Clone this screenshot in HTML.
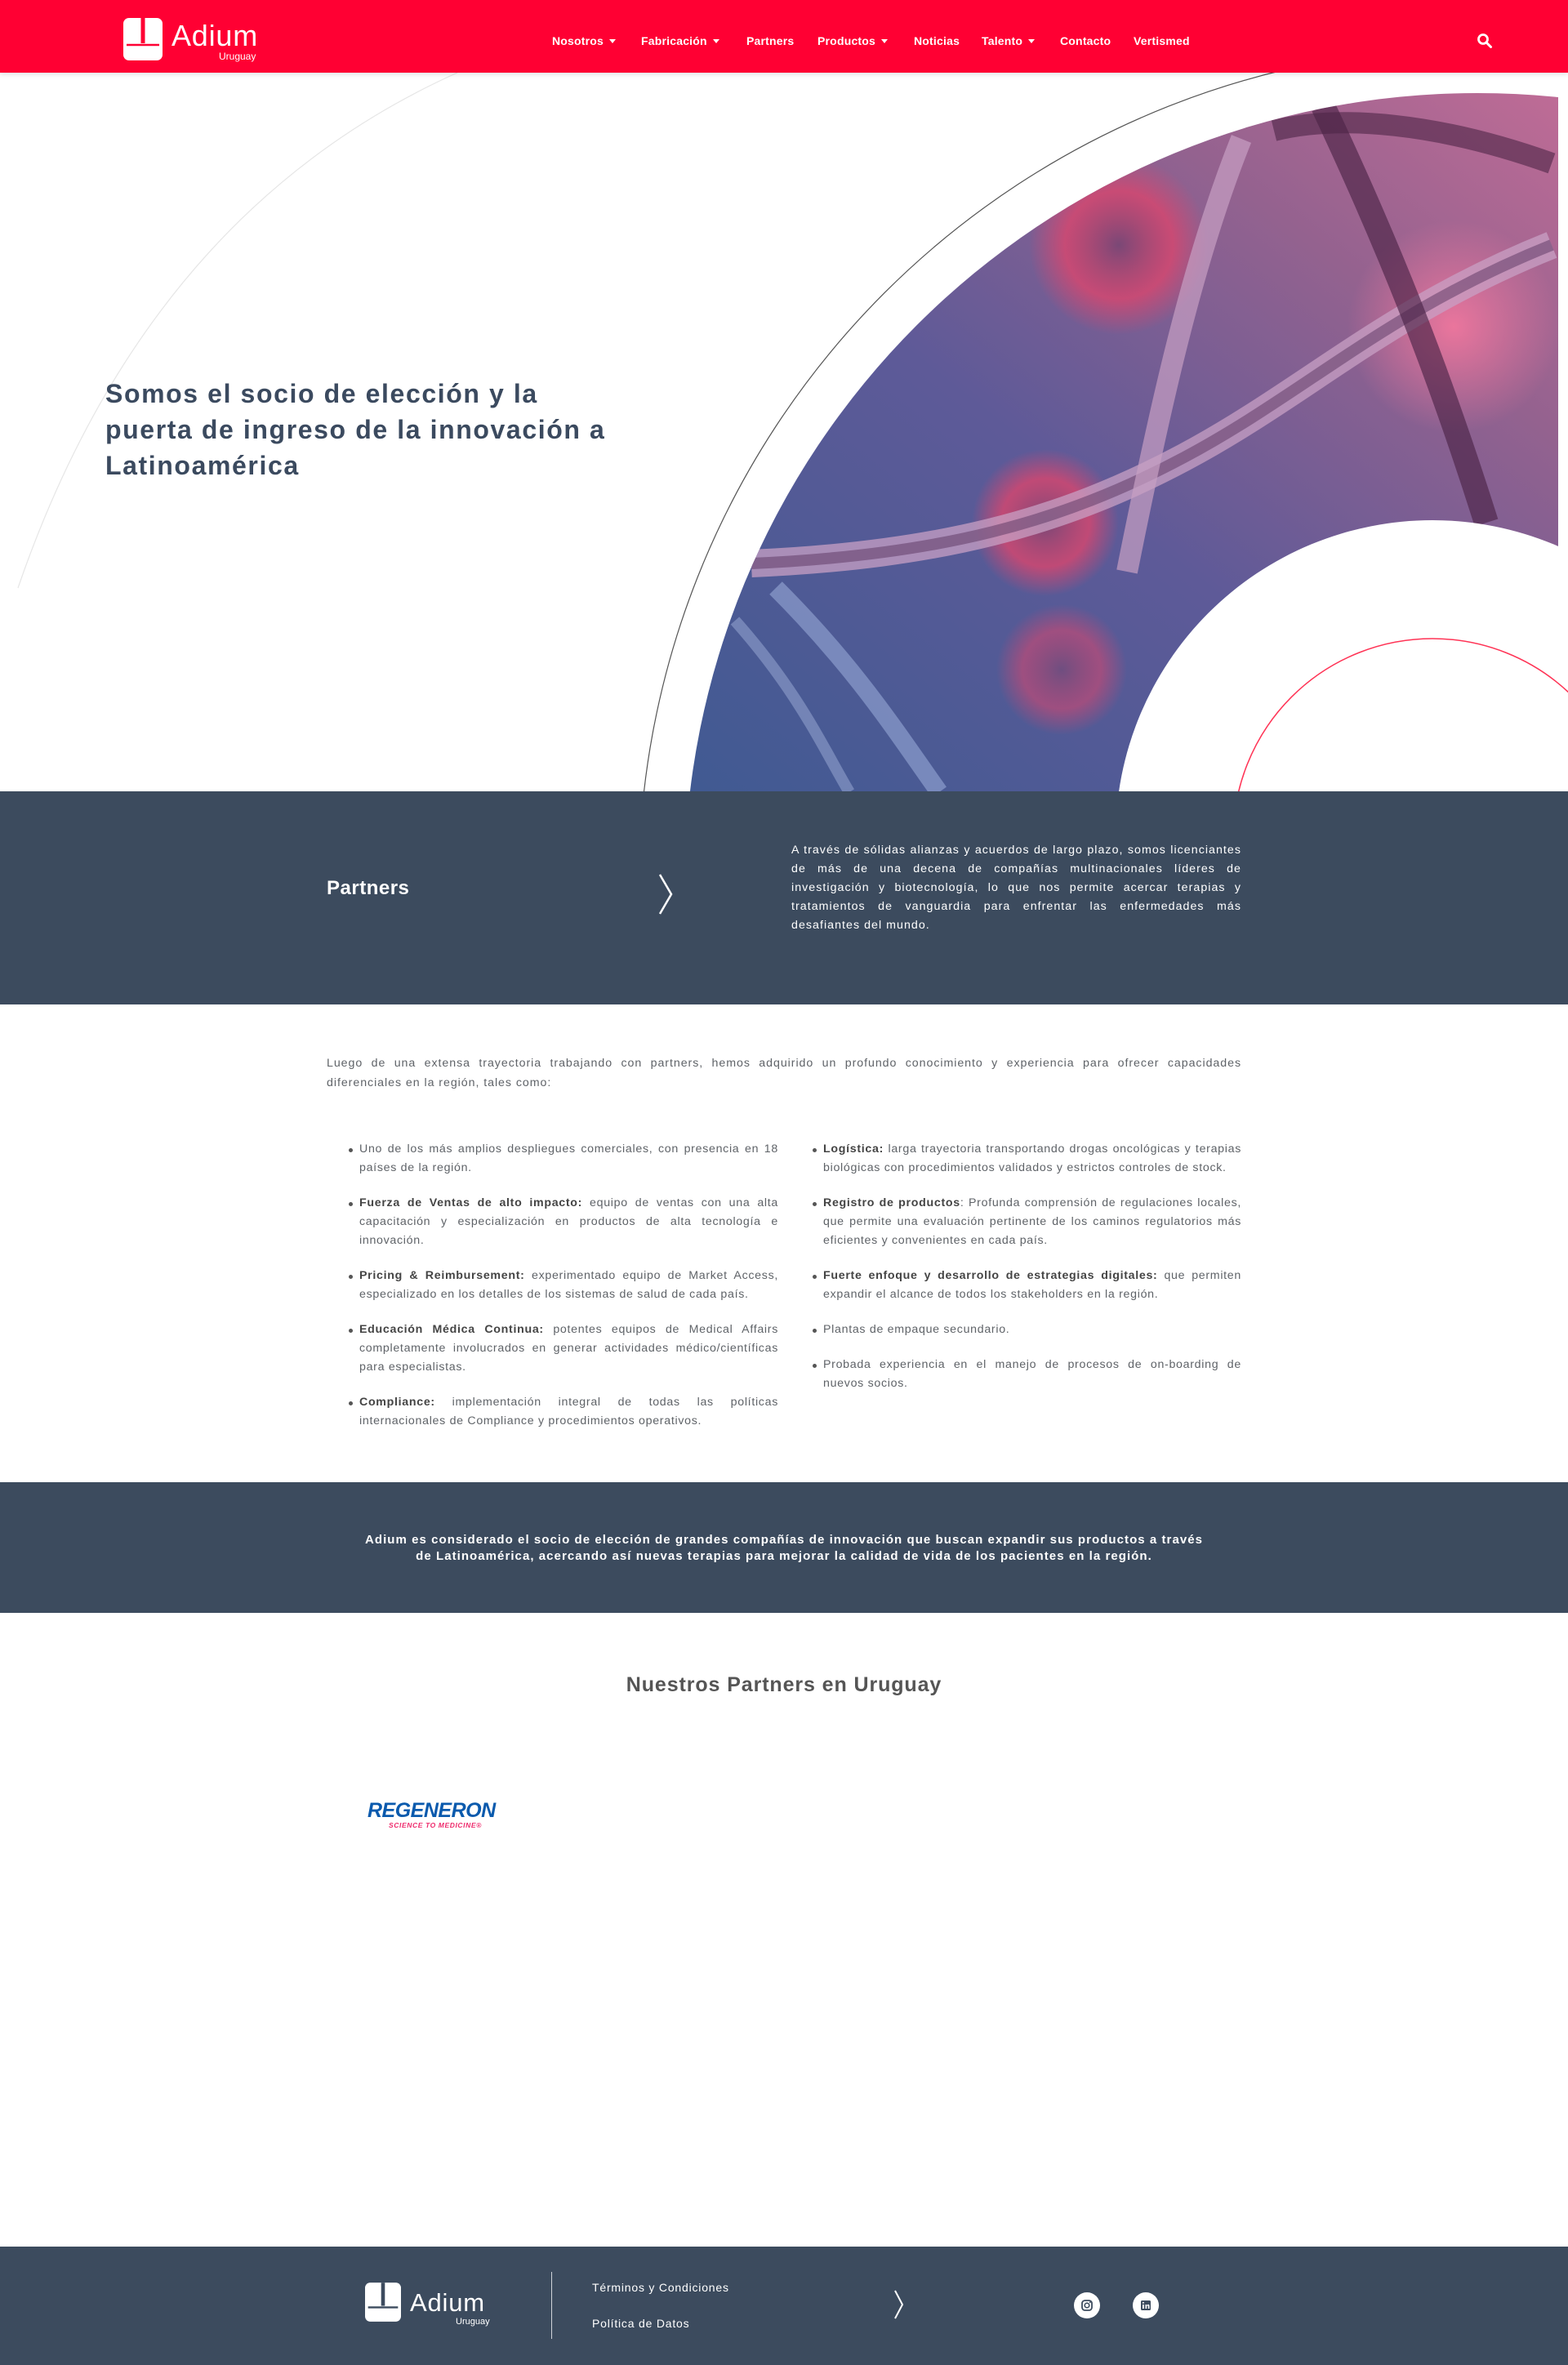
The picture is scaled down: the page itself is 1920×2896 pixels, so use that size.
<!DOCTYPE html>
<html><head><meta charset="utf-8">
<style>
*{margin:0;padding:0;box-sizing:border-box}
body{width:1920px;height:2896px;position:relative;background:#fff;font-family:"Liberation Sans",sans-serif;overflow:hidden}
.abs{position:absolute}
header{position:absolute;left:0;top:0;width:1920px;height:89px;background:#ff0033;box-shadow:0 2px 6px rgba(0,0,0,.12);z-index:5}
.nav{position:absolute;top:42px;color:#fff;font-size:14px;font-weight:bold;white-space:nowrap;letter-spacing:0.2px}
.car{display:inline-block;width:0;height:0;border-left:4px solid transparent;border-right:4px solid transparent;border-top:5px solid #fff;margin-left:7px;vertical-align:2px}
.band{position:absolute;left:0;width:1920px;background:#3c4b5e}
p.j{text-align:justify}
.col{position:absolute;color:#5f6368;font-size:14.2px;line-height:23px;letter-spacing:0.7px}
.col li{list-style:none;position:relative;padding-left:0;margin-bottom:20px;text-align:justify}
.col li:before{content:"";position:absolute;left:-13px;top:10px;width:5px;height:5px;border-radius:50%;background:#555}
.col b{color:#444}
</style></head><body>
<header>
  <svg class="abs" style="left:151px;top:22px" width="48" height="52" viewBox="0 0 48 52">
    <rect x="0" y="0" width="48" height="52" rx="7" fill="#fff"/>
    <rect x="21.5" y="0" width="5" height="31" fill="#ff0033"/>
    <path d="M4 33 H44" stroke="#ff0033" stroke-width="2.5" fill="none"/>
  </svg>
  <div class="abs" style="left:210px;top:23px;color:#fff;font-size:36px;letter-spacing:0.8px">Adium</div>
  <div class="abs" style="left:268px;top:62px;color:#fff;font-size:12px">Uruguay</div>
  <div class="nav" style="left:676px">Nosotros<span class="car"></span></div>
  <div class="nav" style="left:785px">Fabricación<span class="car"></span></div>
  <div class="nav" style="left:914px">Partners</div>
  <div class="nav" style="left:1001px">Productos<span class="car"></span></div>
  <div class="nav" style="left:1119px">Noticias</div>
  <div class="nav" style="left:1202px">Talento<span class="car"></span></div>
  <div class="nav" style="left:1298px">Contacto</div>
  <div class="nav" style="left:1388px">Vertismed</div>
  <svg class="abs" style="left:1808px;top:40px" width="20" height="20" viewBox="0 0 20 20"><circle cx="8" cy="8" r="5.5" stroke="#fff" stroke-width="2.8" fill="none"/><path d="M12 12 L17.5 17.5" stroke="#fff" stroke-width="3" stroke-linecap="round"/></svg>
</header>

<svg class="abs" style="left:0;top:0" width="1920" height="970" viewBox="0 0 1920 970">
  <defs>
    <clipPath id="cc"><circle cx="1809" cy="1085" r="971"/></clipPath>
    <linearGradient id="bg" x1="0" y1="1" x2="1" y2="0">
      <stop offset="0" stop-color="#3f5a92"/>
      <stop offset="0.45" stop-color="#5e5a98"/>
      <stop offset="0.75" stop-color="#94628f"/>
      <stop offset="1" stop-color="#c06c96"/>
    </linearGradient>
    <radialGradient id="v1"><stop offset="0" stop-color="#7a4876"/><stop offset="0.6" stop-color="#d9466e" stop-opacity=".8"/><stop offset="1" stop-color="#d9466e" stop-opacity="0"/></radialGradient>
    <radialGradient id="v2"><stop offset="0" stop-color="#ff7aa0" stop-opacity=".8"/><stop offset="1" stop-color="#ff7aa0" stop-opacity="0"/></radialGradient>
  </defs>
  <path d="M22 720 Q180 260 560 89" stroke="#e6e6e6" stroke-width="1.2" fill="none"/>
  <circle cx="1809" cy="1085" r="1027" stroke="#555" stroke-width="1.2" fill="none"/>
  <g clip-path="url(#cc)">
    <rect x="800" y="100" width="1108" height="870" fill="url(#bg)"/>
    <circle cx="1370" cy="300" r="110" fill="url(#v1)"/>
    <circle cx="1780" cy="400" r="130" fill="url(#v2)"/>
    <circle cx="1280" cy="640" r="90" fill="url(#v1)"/>
    <circle cx="1300" cy="820" r="80" fill="url(#v1)" opacity=".7"/>
    <path d="M920 690 C1150 680 1300 640 1450 560 C1600 480 1700 380 1900 300" stroke="#c8a0c4" stroke-width="34" fill="none" opacity=".75"/>
    <path d="M920 690 C1150 680 1300 640 1450 560 C1600 480 1700 380 1900 300" stroke="#5a3460" stroke-width="14" fill="none" opacity=".5"/>
    <path d="M1520 170 C1460 320 1420 500 1380 700" stroke="#c7a0c3" stroke-width="26" fill="none" opacity=".7"/>
    <path d="M1620 130 C1700 300 1760 450 1820 640" stroke="#4c2446" stroke-width="30" fill="none" opacity=".65"/>
    <path d="M1560 160 C1640 140 1760 150 1900 200" stroke="#4c2446" stroke-width="26" fill="none" opacity=".6"/>
    <path d="M950 720 C1050 820 1100 900 1150 970" stroke="#9fb0dc" stroke-width="22" fill="none" opacity=".55"/>
    <path d="M900 760 C980 850 1010 920 1040 970" stroke="#a9b8e0" stroke-width="14" fill="none" opacity=".45"/>
    <rect x="1908" y="0" width="20" height="970" fill="#fff"/>
  </g>
  <circle cx="1754" cy="1025" r="388" fill="#fff"/>
  <circle cx="1754" cy="1026" r="244" stroke="#ff3355" stroke-width="1.5" fill="none"/>
</svg>

<div class="abs" style="left:129px;top:460px;color:#3b4a5f;font-size:32px;font-weight:bold;line-height:44px;letter-spacing:1.6px">Somos el socio de elección y la<br>puerta de ingreso de la innovación a<br>Latinoamérica</div>

<div class="band" style="top:969px;height:261px">
  <div class="abs" style="left:400px;top:105px;color:#fff;font-size:24px;font-weight:bold;letter-spacing:0.5px">Partners</div>
  <svg class="abs" style="left:804px;top:100px" width="24" height="52" viewBox="0 0 24 52"><path d="M4 2 L18 26 L4 50" stroke="#fff" stroke-width="2.5" fill="none"/></svg>
  <p class="j abs" style="left:969px;top:61px;width:551px;color:#fff;font-size:14.2px;line-height:23px;letter-spacing:1.05px">A través de sólidas alianzas y acuerdos de largo plazo, somos licenciantes de más de una decena de compañías multinacionales líderes de investigación y biotecnología, lo que nos permite acercar terapias y tratamientos de vanguardia para enfrentar las enfermedades más desafiantes del mundo.</p>
</div>

<p class="j abs" style="left:400px;top:1290px;width:1120px;color:#5f6368;font-size:14.2px;line-height:24px;letter-spacing:0.95px">Luego de una extensa trayectoria trabajando con partners, hemos adquirido un profundo conocimiento y experiencia para ofrecer capacidades diferenciales en la región, tales como:</p>

<ul class="col" style="left:440px;top:1396px;width:513px">
<li>Uno de los más amplios despliegues comerciales, con presencia en 18 países de la región.</li>
<li><b>Fuerza de Ventas de alto impacto:</b> equipo de ventas con una alta capacitación y especialización en productos de alta tecnología e innovación.</li>
<li><b>Pricing &amp; Reimbursement:</b> experimentado equipo de Market Access, especializado en los detalles de los sistemas de salud de cada país.</li>
<li><b>Educación Médica Continua:</b> potentes equipos de Medical Affairs completamente involucrados en generar actividades médico/científicas para especialistas.</li>
<li><b>Compliance:</b> implementación integral de todas las políticas internacionales de Compliance y procedimientos operativos.</li>
</ul>
<ul class="col" style="left:1008px;top:1396px;width:512px">
<li><b>Logística:</b> larga trayectoria transportando drogas oncológicas y terapias biológicas con procedimientos validados y estrictos controles de stock.</li>
<li><b>Registro de productos</b>: Profunda comprensión de regulaciones locales, que permite una evaluación pertinente de los caminos regulatorios más eficientes y convenientes en cada país.</li>
<li><b>Fuerte enfoque y desarrollo de estrategias digitales:</b> que permiten expandir el alcance de todos los stakeholders en la región.</li>
<li>Plantas de empaque secundario.</li>
<li>Probada experiencia en el manejo de procesos de on-boarding de nuevos socios.</li>
</ul>

<div class="band" style="top:1815px;height:160px">
  <p class="abs" style="left:260px;top:61px;width:1400px;text-align:center;color:#fff;font-size:15px;font-weight:bold;line-height:20px;letter-spacing:1.05px">Adium es considerado el socio de elección de grandes compañías de innovación que buscan expandir sus productos a través<br>de Latinoamérica, acercando así nuevas terapias para mejorar la calidad de vida de los pacientes en la región.</p>
</div>

<div class="abs" style="left:0;top:2049px;width:1920px;text-align:center;color:#555;font-size:25px;font-weight:bold;letter-spacing:0.9px">Nuestros Partners en Uruguay</div>

<div class="abs" style="left:450px;top:2203px;color:#0a5aad;font-size:25px;font-weight:bold;font-style:italic;letter-spacing:-0.5px">REGENERON</div>
<div class="abs" style="left:476px;top:2230px;color:#ee2a6c;font-size:8.5px;font-weight:bold;font-style:italic;letter-spacing:0.6px">SCIENCE TO MEDICINE®</div>

<div class="band" style="top:2751px;height:145px">
  <svg class="abs" style="left:447px;top:44px" width="44" height="48" viewBox="0 0 48 52">
    <rect x="0" y="0" width="48" height="52" rx="7" fill="#fff"/>
    <rect x="21.5" y="0" width="5" height="31" fill="#3c4b5e"/>
    <path d="M4 33 H44" stroke="#3c4b5e" stroke-width="2.5" fill="none"/>
  </svg>
  <div class="abs" style="left:502px;top:51px;color:#fff;font-size:31px;letter-spacing:0.8px">Adium</div>
  <div class="abs" style="left:558px;top:86px;color:#fff;font-size:11px">Uruguay</div>
  <div class="abs" style="left:675px;top:31px;width:1px;height:82px;background:#d0d4da"></div>
  <div class="abs" style="left:725px;top:42px;color:#fff;font-size:14px;letter-spacing:0.8px">Términos y Condiciones</div>
  <div class="abs" style="left:725px;top:86px;color:#fff;font-size:14px;letter-spacing:0.8px">Política de Datos</div>
  <svg class="abs" style="left:1093px;top:52px" width="16" height="38" viewBox="0 0 16 38"><path d="M3 2 L12 19 L3 36" stroke="#fff" stroke-width="2" fill="none"/></svg>
  <svg class="abs" style="left:1315px;top:56px" width="32" height="32" viewBox="0 0 32 32"><circle cx="16" cy="16" r="16" fill="#fff"/><rect x="10" y="10" width="12" height="12" rx="3.5" stroke="#3c4b5e" stroke-width="1.8" fill="none"/><circle cx="16" cy="16" r="2.8" stroke="#3c4b5e" stroke-width="1.6" fill="none"/><circle cx="19.7" cy="12.3" r="0.9" fill="#3c4b5e"/></svg>
  <svg class="abs" style="left:1387px;top:56px" width="32" height="32" viewBox="0 0 32 32"><circle cx="16" cy="16" r="16" fill="#fff"/><rect x="10" y="10" width="12" height="12" rx="1.5" fill="#3c4b5e"/><rect x="12" y="15" width="1.8" height="5" fill="#fff"/><circle cx="12.9" cy="12.8" r="1" fill="#fff"/><path d="M15.5 20 V15 H17.2 V16 Q18 14.8 19.3 14.9 Q20.5 15 20.5 16.8 V20 H18.8 V17.2 Q18.8 16.3 18 16.3 Q17.2 16.3 17.2 17.3 V20 Z" fill="#fff"/></svg>
</div>
</body></html>
